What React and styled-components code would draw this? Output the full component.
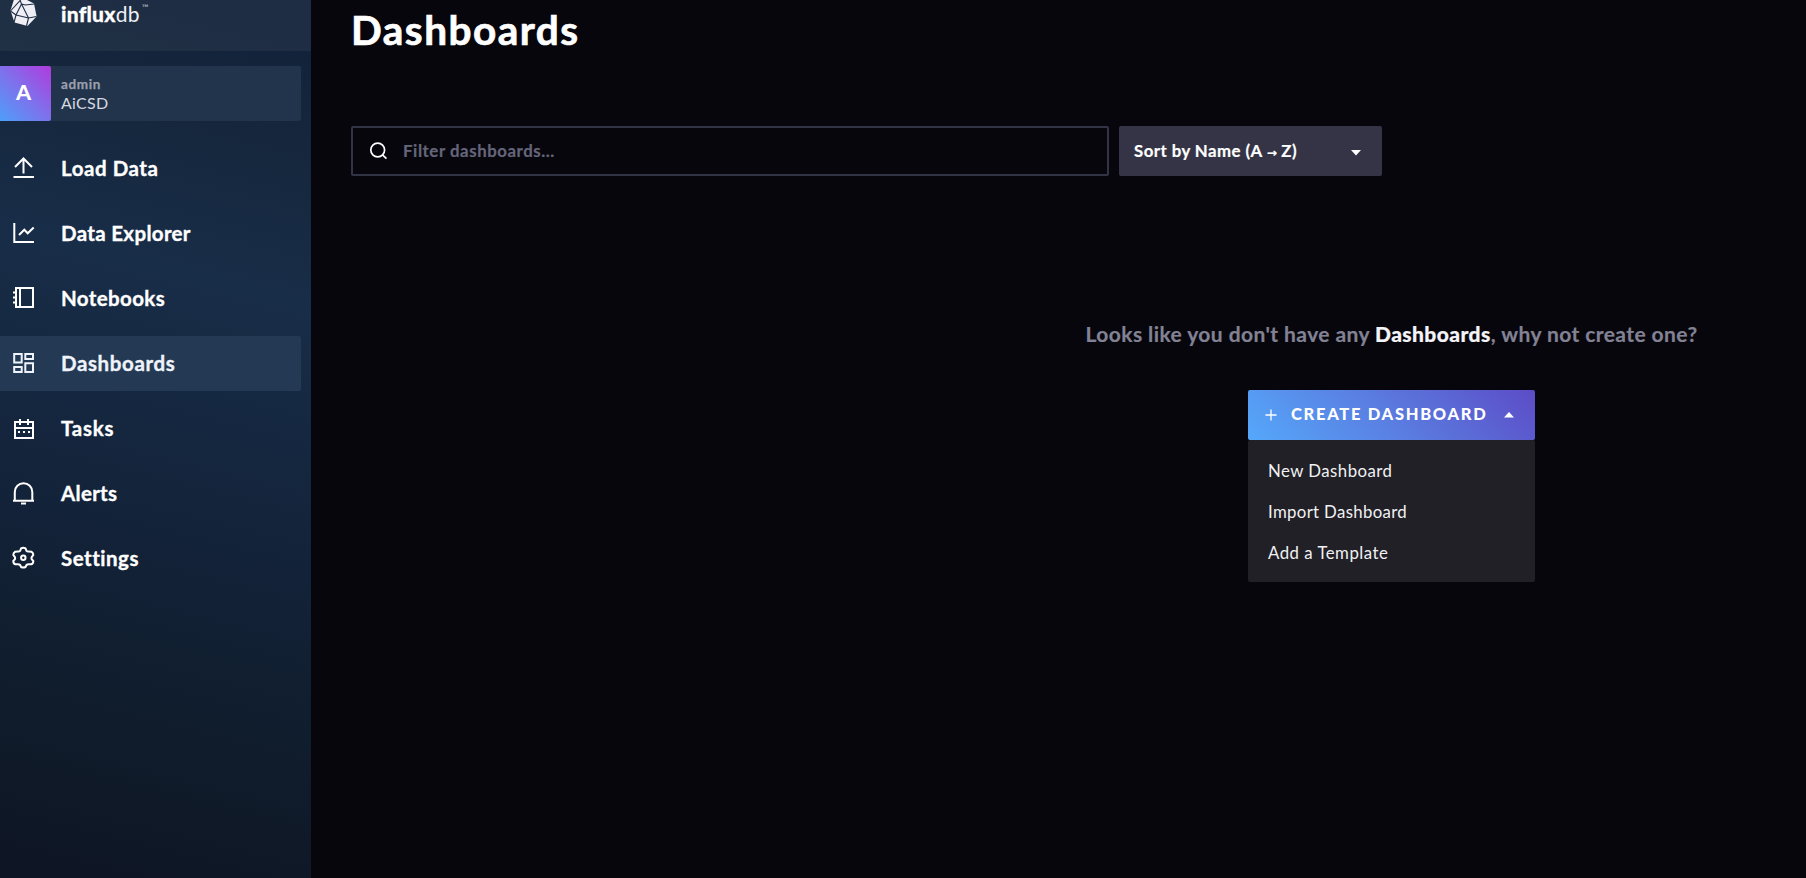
import React from 'react';
import styled, { createGlobalStyle } from 'styled-components';

const Global = createGlobalStyle`
  * { box-sizing: border-box; }
  body { margin: 0; background: #07060d; color: #fff; font-family: Lato, "Open Sans", sans-serif; overflow: hidden; }
`;

const Page = styled.div`
  display: flex;
  width: 100%;
  height: 878px;
  overflow: hidden;
`;

const Sidebar = styled.nav`
  width: 311px;
  flex: none;
  background: linear-gradient(14deg, #0e1524 0%, #101d2d 22%, #13233a 42%, #182d48 68%, #16273d 84%, #12223a 95%);
`;

const Brand = styled.div`
  height: 51px;
  display: flex;
  align-items: flex-start;
  background: rgba(255, 255, 240, 0.05);
`;

const BrandMark = styled.svg`
  width: 61px;
  height: 28px;
  flex: none;
`;

const BrandName = styled.div`
  font-size: 21px;
  line-height: 26px;
  font-weight: 900;
  margin-top: 1px;
  letter-spacing: 0.25px;
  display: flex;
  -webkit-text-stroke: 0.3px currentColor;
  span { font-weight: 400; color: #eef0f4; -webkit-text-stroke: 0; }
  small { font-size: 9px; line-height: 10px; font-weight: 400; letter-spacing: 0; margin: 2px 0 0 2px; color: #c5cad3; -webkit-text-stroke: 0; }
`;

const User = styled.div`
  height: 55px;
  width: 301px;
  margin: 15px 0 20px;
  display: flex;
  border-radius: 0 2px 2px 0;
  overflow: hidden;
  background: #22344b;
`;

const Avatar = styled.div`
  width: 51px;
  display: flex;
  align-items: center;
  justify-content: center;
  padding: 0 4px 3px 0;
  font-size: 21.5px;
  font-weight: 900;
  border-radius: 0 2px 2px 0;
  background: linear-gradient(45deg, #4d9ff9 0%, #7f70ec 50%, #b03bdd 100%);
`;

const UserText = styled.div`
  padding: 9px 0 0 10px;
`;

const UserName = styled.div`
  font-size: 13.5px;
  line-height: 19px;
  font-weight: 700;
  color: #9b9fae;
  letter-spacing: 0.65px;
  -webkit-text-stroke: 0.25px currentColor;
`;

const OrgName = styled.div`
  font-size: 16px;
  line-height: 18px;
  color: #d5d8e0;
  letter-spacing: 0.3px;
`;

const NavItem = styled.a`
  display: flex;
  align-items: center;
  height: 55px;
  width: 301px;
  margin-bottom: 10px;
  padding-bottom: 1px;
  border-radius: 0 2px 2px 0;
  color: ${p => (p.$active ? '#eff3fb' : '#fff')};
  background: ${p => (p.$active ? '#243a54' : 'transparent')};
`;

const NavIcon = styled.svg`
  width: 24px;
  height: 24px;
  margin: 0 26px 0 11px;
  flex: none;
  fill: none;
  stroke: currentColor;
  stroke-width: 2;
`;

const NavLabel = styled.span`
  font-size: 20.5px;
  font-weight: 700;
  line-height: 26px;
  padding-bottom: 1px;
  letter-spacing: ${p => p.$ls || 0}px;
  -webkit-text-stroke: 0.35px currentColor;
`;

const Main = styled.main`
  flex: 1;
  padding: 0 40px;
`;

const Title = styled.h1`
  margin: 0;
  height: 126px;
  padding-top: 5px;
  font-size: 40.5px;
  line-height: 50px;
  font-weight: 700;
  letter-spacing: 1.5px;
  -webkit-text-stroke: 0.7px #fff;
`;

const Controls = styled.div`
  display: flex;
  gap: 10px;
`;

const Search = styled.div`
  width: 758px;
  height: 50px;
  border: 2px solid #333346;
  border-radius: 2px;
  display: flex;
  align-items: center;
  padding-left: 16px;
  font-size: 16.8px;
  font-weight: 700;
  color: #65657a;
  svg { margin-right: 14px; }
`;

const Sort = styled.div`
  width: 263px;
  height: 50px;
  border-radius: 2px;
  background: #353446;
  display: flex;
  align-items: center;
  justify-content: space-between;
  padding: 0 21px 0 15px;
  font-size: 16.8px;
  font-weight: 700;
  svg { margin-top: 3px; }
`;

const Spaced = styled.span`
  line-height: 22px;
  white-space: nowrap;
  letter-spacing: ${p => p.$ls}px;
  -webkit-text-stroke: 0.2px currentColor;
`;

const Arrow = styled.span`
  font: 700 12px/1 "DejaVu Sans", sans-serif;
  letter-spacing: 0;
`;

const Empty = styled.section`
  width: 613px;
  margin: 145px 0 0 734px;
  display: flex;
  flex-direction: column;
  align-items: center;
`;

const Message = styled.h2`
  margin: 0 0 43px;
  font-size: 21px;
  line-height: 26px;
  font-weight: 700;
  white-space: nowrap;
  color: #828294;
  letter-spacing: 0.42px;
  -webkit-text-stroke: 0.2px currentColor;
  b { color: #f4f4f8; }
`;

const Dropdown = styled.div`
  width: 287px;
`;

const CreateButton = styled.div`
  height: 50px;
  border-radius: 2px;
  display: flex;
  align-items: center;
  padding: 0 21px 0 17px;
  font-size: 16.5px;
  font-weight: 900;
  background: linear-gradient(45deg, #55a8fb 0%, #5a80e2 45%, #5c4cc6 100%);
  span { margin: 0 auto 0 14px; padding-bottom: 2px; letter-spacing: 1.7px; white-space: nowrap; }
`;

const Menu = styled.div`
  height: 142px;
  padding: 10px 20px;
  background: #202026;
  border-radius: 2px;
`;

const MenuItem = styled.div`
  height: 41px;
  line-height: 41px;
  font-size: 16.8px;
  color: #f1f1f3;
  letter-spacing: ${p => p.$ls || 0}px;
`;

const icons = {
  upload: <path d="M12.500 17.500V2.500M4 11l8.500-8.500L21 11M2.500 21h20.500" />,
  chart: <path d="M3.300 2v19H23M8 14l5.300-5.300 3.400 3.600 6-5.800" />,
  book: <path d="M5 2h17v19H5zM9 2v19M2 6.500h3M2 11.500h3M2 16.500h3" />,
  grid: <path d="M3.200 3h7.500v8.500H3.200zM14.300 3h7.700v5h-7.700zM3.200 16h7.500v5H3.200zM14.300 12.300h7.700V21h-7.700z" />,
  calendar: <path d="M4 6h18v16H4zM4 12h18M9 3v6M17 3v6M7 16h2M12 16h2M17 16h2" />,
  bell: <path d="M2 19.700h21M3.800 20v-9a8.750 8.750 0 0 1 17.500 0v9M10 22.500h5" />,
  gear: (
    <g transform="translate(-0.200 -0.800)">
      <path d="M10.300 3.200q2.200-1.400 4.400 0l1 2.500q.7.700 2.200.5l2.600.3q2 1.300 2 3.300l-1.600 2.200q-.4 1 0 2l1.600 1.700q0 2.600-2 3.300h-2.600q-1.500 0-2.200.8l-1 2q-2.200 1.200-4.400 0l-1-2q-.7-.8-2.200-.8H4.500q-2-.7-2-3.300L4.100 14q.4-1 0-2L2.500 9.800q0-2 2-3.300l2.600-.3q1.500.2 2.200-.5z" strokeLinejoin="round" />
      <circle cx="12.500" cy="12.500" r="2.200" />
    </g>
  ),
};

const items = [
  ['Load Data', 'upload', 0.55],
  ['Data Explorer', 'chart', 0.33],
  ['Notebooks', 'book', 0.37],
  ['Dashboards', 'grid', 0.62],
  ['Tasks', 'calendar', 0.8],
  ['Alerts', 'bell', 0.3],
  ['Settings', 'gear', 0.5],
];

const menuItems = [
  ['New Dashboard', 0.46],
  ['Import Dashboard', 0.34],
  ['Add a Template', 0.5],
];

export default function App() {
  return (
    <>
      <Global />
      <Page>
        <Sidebar>
          <Brand>
            <BrandMark viewBox="0 0 61 28">
              <path d="M14-.5L25-1l9 4.500 2.600 13L27.500 26l-13-3.500-4-12z" fill="#eeeef4" />
              <path d="M10.500 11L21-.5M20 0l1.500 4 4 1M21.500 4L16 15M21.500 4l7 14M10.500 11l5.500 4M16 15l12.500 3M16 15l-2 7.500M28.500 18l-2 8M28.500 18l8-1.500M25 5l9.500-1" stroke="#1f2e44" strokeWidth="1.100" fill="none" />
            </BrandMark>
            <BrandName>influx<span>db</span><small>™</small></BrandName>
          </Brand>
          <User>
            <Avatar>A</Avatar>
            <UserText>
              <UserName>admin</UserName>
              <OrgName>AiCSD</OrgName>
            </UserText>
          </User>
          {items.map(([label, icon, ls]) => (
            <NavItem key={label} $active={label === 'Dashboards'}>
              <NavIcon viewBox="0 0 24 24">{icons[icon]}</NavIcon>
              <NavLabel $ls={ls}>{label}</NavLabel>
            </NavItem>
          ))}
        </Sidebar>
        <Main>
          <Title>Dashboards</Title>
          <Controls>
            <Search>
              <svg width="20" height="20" viewBox="0 0 20 20" fill="none" stroke="#fff" strokeWidth="1.700">
                <circle cx="8.700" cy="9" r="6.900" />
                <path d="M13.500 13.800l4 3.800" />
              </svg>
              <Spaced $ls={0.57}>Filter dashboards...</Spaced>
            </Search>
            <Sort>
              <Spaced $ls={0.46}>Sort by Name (A <Arrow>→</Arrow> Z)</Spaced>
              <svg width="10" height="6" viewBox="0 0 10 6"><path d="M0 0h10L5 5.500z" fill="#fff" /></svg>
            </Sort>
          </Controls>
          <Empty>
            <Message>Looks like you don't have any <b>Dashboards</b>, why not create one?</Message>
            <Dropdown>
              <CreateButton>
                <svg width="12" height="12" viewBox="0 0 12 12"><path d="M6 .5v11M.5 6h11" stroke="#fff" strokeWidth="1.300" /></svg>
                <span>CREATE DASHBOARD</span>
                <svg width="10" height="6" viewBox="0 0 10 6"><path d="M0 5.500h10L5 0z" fill="#fff" /></svg>
              </CreateButton>
              <Menu>
                {menuItems.map(([label, ls]) => (
                  <MenuItem key={label} $ls={ls}>{label}</MenuItem>
                ))}
              </Menu>
            </Dropdown>
          </Empty>
        </Main>
      </Page>
    </>
  );
}
